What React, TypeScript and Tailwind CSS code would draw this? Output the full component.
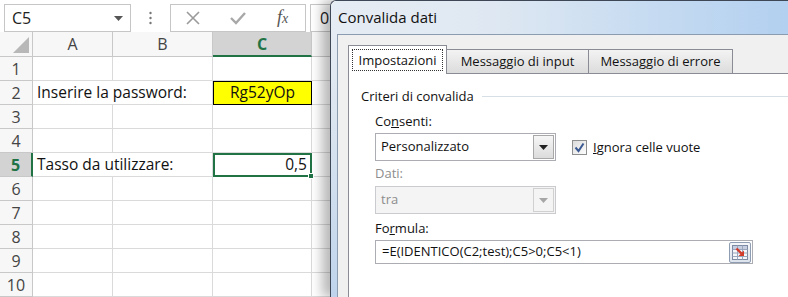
import React from "react";

const sheetFont = { fontFamily: '"Open Sans", "Liberation Sans", sans-serif' };
const uiFont = { fontFamily: '"Open Sans", "Noto Sans", sans-serif' };

function Caret({ color = "#333" }: { color?: string }) {
  return (
    <svg width="9" height="5" viewBox="0 0 9 5">
      <polygon points="0,0 9,0 4.5,5" fill={color} />
    </svg>
  );
}

function TopBar() {
  return (
    <div className="flex h-[42px] items-start bg-white pt-[4px]">
      <div className="ml-[4px] flex h-[28px] w-[127px] items-center justify-between border border-[#c6c6c6] pl-[7px] pr-[7px] text-[16px] text-[#222]">
        <span>C5</span>
        <Caret color="#555" />
      </div>
      <div className="flex h-[28px] w-[39px] items-center justify-center">
        <svg width="3" height="14" viewBox="0 0 3 14">
          <circle cx="1.5" cy="2" r="1.2" fill="#777" />
          <circle cx="1.5" cy="7" r="1.2" fill="#777" />
          <circle cx="1.5" cy="12" r="1.2" fill="#777" />
        </svg>
      </div>
      <div className="grid h-[28px] w-[136px] grid-cols-3 items-center border border-[#c6c6c6]">
        <div className="flex justify-center">
          <svg width="14" height="14" viewBox="0 0 14 14">
            <path d="M1 1 L13 13 M13 1 L1 13" stroke="#9a9a9a" strokeWidth="1.6" />
          </svg>
        </div>
        <div className="flex justify-center">
          <svg width="16" height="14" viewBox="0 0 16 14">
            <path d="M1 7 L6 12 L15 2" stroke="#a8a8a8" strokeWidth="2.4" fill="none" />
          </svg>
        </div>
        <div className="text-center text-[18px] italic leading-[20px] text-[#555]" style={{ fontFamily: '"Liberation Serif", serif' }}>
          <span>f</span>
          <span className="text-[14px]">x</span>
        </div>
      </div>
      <div className="ml-[4px] flex h-[28px] flex-1 items-center border border-r-0 border-[#c6c6c6] pl-[9px] text-[16px] text-[#222]">
        0
      </div>
    </div>
  );
}

const cell = "border-r border-b border-[#dadada] h-[24px]";

function Sheet() {
  const rows = [1, 2, 3, 4, 5, 6, 7, 8, 9, 10];
  return (
    <div className="flex h-full w-[330px] flex-col overflow-hidden bg-white" style={sheetFont}>
      <TopBar />
      <div className="grid grid-cols-[33px_80px_100px_99px_1fr] text-[15.5px]">
        <div className="relative h-[25px] border-r border-b border-[#c8c8c8] bg-[#f7f7f7]">
          <svg className="absolute bottom-[3px] right-[3px]" width="16" height="16" viewBox="0 0 16 16">
            <polygon points="16,0 16,16 0,16" fill="#b8b8b8" />
          </svg>
        </div>
        <div className="flex h-[25px] items-center justify-center border-r border-b border-[#c8c8c8] bg-[#f7f7f7] text-[16px] text-[#444]">
          A
        </div>
        <div className="flex h-[25px] items-center justify-center border-r border-b border-[#c8c8c8] bg-[#f7f7f7] text-[16px] text-[#444]">
          B
        </div>
        <div className="flex h-[25px] items-center justify-center border-r border-b-2 border-r-[#c8c8c8] border-b-[#217346] bg-[#d3d3d3] text-[16px] font-bold text-[#217346]">
          C
        </div>
        <div className="h-[25px] border-b border-[#c8c8c8] bg-[#f7f7f7]" />

        {rows.map((r) => {
          const sel = r === 5;
          return (
            <React.Fragment key={r}>
              <div
                className={
                  sel
                    ? "flex h-[24px] items-center justify-center border-r-2 border-b border-r-[#217346] border-b-[#c8c8c8] bg-[#d3d3d3] text-[16px] font-bold text-[#217346]"
                    : "flex h-[24px] items-center justify-center border-r border-b border-[#c8c8c8] bg-[#f7f7f7] text-[16px] text-[#444]"
                }
              >
                {r}
              </div>
              {r === 2 || r === 5 ? (
                <div className={`col-span-2 flex items-center whitespace-nowrap pl-[4px] text-[#111] ${cell}`}>
                  {r === 2 ? "Inserire la password:" : "Tasso da utilizzare:"}
                </div>
              ) : (
                <>
                  <div className={cell} />
                  <div className={cell} />
                </>
              )}
              {r === 2 ? (
                <div className="flex h-[24px] items-center justify-center border border-black bg-[#ffff00] text-[#111]">
                  Rg52yOp
                </div>
              ) : r === 5 ? (
                <div className="relative flex h-[24px] items-center justify-end border-2 border-[#217346] pr-[3px] text-[#111]">
                  0,5
                  <div className="absolute -bottom-[4px] -right-[4px] h-[6px] w-[6px] border border-white bg-[#217346]" />
                </div>
              ) : (
                <div className={cell} />
              )}
              <div className="h-[24px] border-b border-[#dadada]" />
            </React.Fragment>
          );
        })}
      </div>
    </div>
  );
}

function Select({ value, disabled }: { value: string; disabled?: boolean }) {
  return (
    <div
      className={`flex h-[28px] w-[181px] items-center border pl-[5px] pr-[1px] ${
        disabled ? "border-[#c9cbcf] bg-[#f4f4f4] text-[#8d8d8d]" : "border-[#abadb3] bg-white text-[#111]"
      }`}
    >
      <span className="flex-1">{value}</span>
      <div
        className={`flex h-[24px] w-[21px] items-center justify-center border ${
          disabled
            ? "border-[#d0d0d0] bg-[#f4f4f4]"
            : "border-[#a8a8a8] bg-[linear-gradient(180deg,#f6f6f6,#dcdcdc)]"
        }`}
      >
        <Caret color={disabled ? "#a6a6a6" : "#222"} />
      </div>
    </div>
  );
}

function RefIcon() {
  return (
    <svg width="16" height="15" viewBox="0 0 16 15">
      <rect x="0.5" y="0.5" width="15" height="14" fill="#f4f6fa" stroke="#7d8aa3" />
      <rect x="1" y="1" width="14" height="3" fill="#c4cee0" />
      <path d="M0.5 4.5 H15.5 M0.5 8 H15.5 M0.5 11.5 H15.5 M5.5 0.5 V14.5 M10.5 0.5 V14.5" stroke="#9aa6bb" strokeWidth="1" />
      <path d="M4.5 3.5 L9.5 8.5" stroke="#d23a2a" strokeWidth="2.4" />
      <polygon points="12,11 12,5.5 6.5,11" fill="#d23a2a" />
    </svg>
  );
}

function Dialog() {
  return (
    <div className="relative flex h-full w-[458px] flex-col rounded-tl-[6px] border-l border-t border-[#3d4756] shadow-[-8px_0_12px_rgba(0,0,0,0.28)]" style={uiFont}>
      <div className="flex h-[33px] items-center rounded-tl-[6px] bg-[linear-gradient(90deg,#e6ecf3_0%,#dfe8f2_35%,#c6dbf1_70%,#b3d0f0_100%)] pl-[7px] text-[15px] text-[#111]">
        Convalida dati
      </div>
      <div className="flex flex-1">
        <div className="w-[6px] bg-[linear-gradient(180deg,#e6ecf3_0%,#d8e3ef_40%,#bfd4ec_100%)]" />
        <div className="flex flex-1 flex-col border-l border-t border-[#8b9bb0] bg-[#f0f0f0] pl-[10px] pt-[10px] text-[13px] text-[#111]">
          <div className="flex h-[28px] items-end">
            <div className="relative z-10 -mb-px flex h-[29px] w-[99px] items-center justify-center border border-b-0 border-[#898c95] bg-white">
              <span className="border border-dotted border-[#333] px-[6px] leading-[20px]">Impostazioni</span>
            </div>
            <div className="-ml-px flex h-[24px] w-[143px] items-center justify-center border border-b-0 border-[#898c95] bg-[linear-gradient(180deg,#f3f3f3,#dcdcdc)]">
              Messaggio di input
            </div>
            <div className="-ml-px flex h-[24px] w-[145px] items-center justify-center border border-b-0 border-[#898c95] bg-[linear-gradient(180deg,#f3f3f3,#dcdcdc)]">
              Messaggio di errore
            </div>
          </div>
          <div className="flex-1 border-l border-t border-[#898c95] bg-white pl-[12px] pt-[13px]">
            <div className="flex items-center leading-[18px]">
              <span>Criteri di convalida</span>
              <div className="ml-[8px] h-px flex-1 bg-[#d5dfe5]" />
            </div>
            <div className="pl-[14px]">
              <div className="mt-[7px] leading-[18px]">
                Co<span className="underline">n</span>senti:
              </div>
              <div className="mt-[3px] flex items-center gap-[16px]">
                <Select value="Personalizzato" />
                <div className="flex items-center gap-[6px]">
                  <div className="flex h-[15px] w-[15px] items-center justify-center border border-[#8e8f8f] bg-[linear-gradient(135deg,#dcdcdc,#fdfdfd)]">
                    <svg width="11" height="11" viewBox="0 0 11 11">
                      <path d="M1.5 5.5 L4.5 9 L9.5 1.5" stroke="#3c5a92" strokeWidth="2" fill="none" />
                    </svg>
                  </div>
                  <span className="leading-[18px]">
                    <span className="underline">I</span>gnora celle vuote
                  </span>
                </div>
              </div>
              <div className="mt-[3px] leading-[18px] text-[#8d8d8d]">Dati:</div>
              <div className="mt-[4px]">
                <Select value="tra" disabled />
              </div>
              <div className="mt-[5px] leading-[18px]">
                Fo<span className="underline">r</span>mula:
              </div>
              <div className="mt-[3px] flex h-[24px] w-[378px] items-center justify-between border border-[#abadb3] bg-white pl-[6px] pr-[1px]">
                <span>=E(IDENTICO(C2;test);C5&gt;0;C5&lt;1)</span>
                <div className="flex h-[21px] w-[22px] items-center justify-center rounded-[2px] border border-[#8f9db3] bg-[linear-gradient(180deg,#f4f6f9,#dde3ec)]">
                  <RefIcon />
                </div>
              </div>
            </div>
          </div>
        </div>
      </div>
    </div>
  );
}

export default function App() {
  return (
    <div className="flex h-[297px] w-[788px] overflow-hidden bg-white">
      <Sheet />
      <Dialog />
    </div>
  );
}
